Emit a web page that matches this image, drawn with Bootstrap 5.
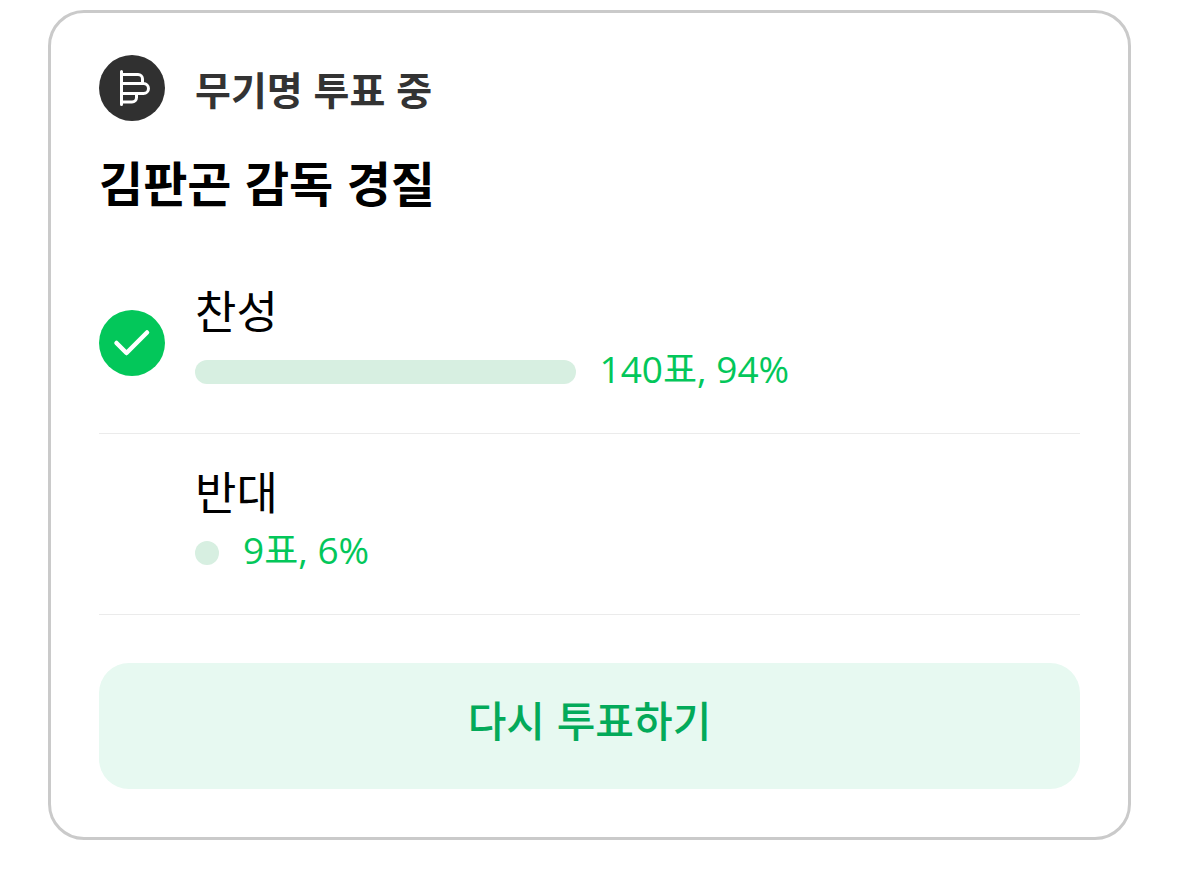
<!DOCTYPE html>
<html lang="ko">
<head>
<meta charset="utf-8">
<meta name="viewport" content="width=device-width, initial-scale=1">
<title>김판곤 감독 경질 투표</title>
<link rel="stylesheet" href="https://cdn.jsdelivr.net/npm/bootstrap@5.3.0/dist/css/bootstrap.min.css">
<style>
body{font-family:"Noto Sans CJK KR",sans-serif;color:#000;background:#fff}
.poll{margin:10px 48px;border:3px solid #cacaca;border-radius:36px;padding:42px 48px 48px}
.poll-head,.option{gap:30px}
.icon-slot{width:66px;height:66px;flex:none}
.icon-slot svg{display:block}
.poll-status{font-size:39px;line-height:66px;font-weight:700;color:#333}
.poll-title{font-size:48px;line-height:72px;font-weight:700;margin:24px 0 36px}
.option{border-bottom:1px solid #ebebeb;padding:28px 0}
.option-name{font-size:45px;line-height:58px}
.result{gap:24px}
.vote-bar{height:24px;border-radius:12px;background:#d7efe1;min-width:24px;flex:none}
.votes{font-family:"Open Sans","Noto Sans CJK KR",sans-serif;font-size:37px;line-height:60px;padding-bottom:6px;color:#03c75a}
.revote,.revote:hover{font-size:42px;line-height:62px;font-weight:500;border-radius:30px;padding:25px 32px 39px;background:#e7f9f1;color:#03aa5a;border:0;margin-top:48px}
</style>
</head>
<body>
<main class="poll">
  <header class="poll-head d-flex align-items-center">
    <div class="icon-slot">
      <svg width="66" height="66" viewBox="0 0 66 66" aria-hidden="true">
        <circle cx="33" cy="33" r="33" fill="#303030"/>
        <path d="M22.5 16.5V49.5M22.5 19.5H39A4.5 4.5 0 0 1 43.5 24V28.5M22.5 28.5H44.5A5 5 0 0 1 44.5 38.5H22.5M37.5 38.5V42.5A4.5 4.5 0 0 1 33 47H22.5" fill="none" stroke="#fff" stroke-width="3" stroke-linecap="round"/>
      </svg>
    </div>
    <div class="poll-status">무기명 투표 중</div>
  </header>
  <h1 class="poll-title">김판곤 감독 경질</h1>
  <ul class="list-unstyled mb-0">
    <li class="option d-flex align-items-center">
      <div class="icon-slot">
        <svg width="66" height="66" viewBox="0 0 66 66" role="img" aria-label="선택함">
          <circle cx="33" cy="33" r="33" fill="#03c75a"/>
          <path d="M17.5 33L27.5 43L48 22.5" fill="none" stroke="#fff" stroke-width="4.5" stroke-linecap="round" stroke-linejoin="round"/>
        </svg>
      </div>
      <div class="flex-grow-1">
        <div class="option-name">찬성</div>
        <div class="result d-flex align-items-center">
          <div class="vote-bar" style="width:43%"></div>
          <div class="votes">140표, 94%</div>
        </div>
      </div>
    </li>
    <li class="option d-flex align-items-center">
      <div class="icon-slot"></div>
      <div class="flex-grow-1">
        <div class="option-name">반대</div>
        <div class="result d-flex align-items-center">
          <div class="vote-bar" style="width:2%"></div>
          <div class="votes">9표, 6%</div>
        </div>
      </div>
    </li>
  </ul>
  <button type="button" class="btn revote w-100">다시 투표하기</button>
</main>
<script src="https://cdn.jsdelivr.net/npm/bootstrap@5.3.0/dist/js/bootstrap.bundle.min.js"></script>
</body>
</html>
